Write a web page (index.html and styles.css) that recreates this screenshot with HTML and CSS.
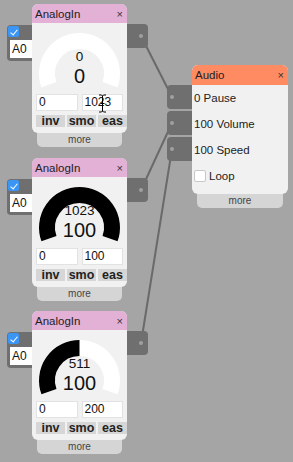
FILE: index.html
```html
<!DOCTYPE html>
<html lang="en">
<head>
  <meta charset="UTF-8" />
  <title>Patch</title>
  <link rel="stylesheet" href="styles.css">
</head>
<body>
  <div class="canvas">
    <svg class="wires" width="293" height="462" viewBox="0 0 293 462">
      <line x1="141" y1="36" x2="172" y2="97" />
      <line x1="141" y1="190" x2="172" y2="123" />
      <line x1="141" y1="343" x2="172" y2="149" />
    </svg>

    <div class="node analog n1">
      <div class="pod pod-in"><span class="check on"></span><span class="pin">A0</span></div>
      <div class="pod pod-out"><i class="dot"></i></div>
      <div class="panel">
        <div class="head"><span>AnalogIn</span><span class="close">×</span></div>
        <div class="body">
          <div class="gauge">
            <svg width="95" height="71" viewBox="0 0 95 71">
              <path class="track" d="M 16.96 61.62 A 32.5 32.5 0 1 1 78.04 61.62" />
            </svg>
            <div class="readout"><span class="raw">0</span><span class="val">0</span></div>
          </div>
          <div class="range"><span class="field">0</span><span class="field">1023</span></div>
          <div class="opts"><span>inv</span><span>smo</span><span>eas</span></div>
        </div>
      </div>
      <div class="more">more</div>
      <svg class="ibeam" width="9" height="19" viewBox="0 0 9 19">
        <path d="M1 1 H3.5 L4.5 2 L5.5 1 H8 M4.5 2 V17 M1 18 H3.5 L4.5 17 L5.5 18 H8 M2.5 9.5 H6.5" />
      </svg>
    </div>

    <div class="node analog n2">
      <div class="pod pod-in"><span class="check on"></span><span class="pin">A0</span></div>
      <div class="pod pod-out"><i class="dot"></i></div>
      <div class="panel">
        <div class="head"><span>AnalogIn</span><span class="close">×</span></div>
        <div class="body">
          <div class="gauge">
            <svg width="95" height="71" viewBox="0 0 95 71">
              <path class="track" d="M 16.96 61.62 A 32.5 32.5 0 1 1 78.04 61.62" />
              <path class="fill" d="M 16.96 61.62 A 32.5 32.5 0 1 1 78.04 61.62" />
            </svg>
            <div class="readout"><span class="raw">1023</span><span class="val">100</span></div>
          </div>
          <div class="range"><span class="field">0</span><span class="field">100</span></div>
          <div class="opts"><span>inv</span><span>smo</span><span>eas</span></div>
        </div>
      </div>
      <div class="more">more</div>
    </div>

    <div class="node analog n3">
      <div class="pod pod-in"><span class="check on"></span><span class="pin">A0</span></div>
      <div class="pod pod-out"><i class="dot"></i></div>
      <div class="panel">
        <div class="head"><span>AnalogIn</span><span class="close">×</span></div>
        <div class="body">
          <div class="gauge">
            <svg width="95" height="71" viewBox="0 0 95 71">
              <path class="track" d="M 16.96 61.62 A 32.5 32.5 0 1 1 78.04 61.62" />
              <path class="fill" d="M 16.96 61.62 A 32.5 32.5 0 0 1 47.5 18" />
            </svg>
            <div class="readout"><span class="raw">511</span><span class="val">100</span></div>
          </div>
          <div class="range"><span class="field">0</span><span class="field">200</span></div>
          <div class="opts"><span>inv</span><span>smo</span><span>eas</span></div>
        </div>
      </div>
      <div class="more">more</div>
    </div>

    <div class="node audio">
      <div class="inlets">
        <div class="pod"><i class="dot"></i></div>
        <div class="pod"><i class="dot"></i></div>
        <div class="pod"><i class="dot"></i></div>
      </div>
      <div class="panel">
        <div class="head"><span>Audio</span><span class="close">×</span></div>
        <div class="body">
          <div class="row">0 Pause</div>
          <div class="row">100 Volume</div>
          <div class="row">100 Speed</div>
          <div class="row"><span class="check"></span>Loop</div>
        </div>
      </div>
      <div class="more">more</div>
    </div>
  </div>
</body>
</html>
```

FILE: styles.css
```css
html, body {
  margin: 0;
  padding: 0;
  background-color: #a5a5a5;
  font-family: "Liberation Sans", Arial, sans-serif;
  color: #111;
}

.canvas {
  position: relative;
  width: 293px;
  height: 462px;
  overflow: hidden;
}

.wires {
  position: absolute;
  top: 0;
  left: 0;
}

.wires line {
  stroke: #6a6a6a;
  stroke-width: 2;
}

/* nodes sit on a free canvas */
.node {
  position: absolute;
  width: 95px;
}

.n1 { left: 32px; top: 4px; }
.n2 { left: 32px; top: 158px; }
.n3 { left: 32px; top: 311px; }

.audio {
  left: 192px;
  top: 65px;
  width: 96px;
}

.panel {
  position: relative;
  z-index: 2;
  background-color: #f1f1f1;
  border-radius: 6px;
  overflow: hidden;
}

.head {
  display: flex;
  justify-content: space-between;
  align-items: center;
  height: 19px;
  padding: 0 4px 0 3px;
  background-color: #e3b0d6;
  font-size: 11.5px;
  color: #222;
}

.audio .head {
  height: 20px;
  background-color: #ff8b62;
}

.close {
  font-size: 11px;
  color: #333;
}

.more {
  margin: 0 5px;
  height: 14px;
  line-height: 13px;
  background-color: #d5d5d5;
  border-radius: 0 0 5px 5px;
  text-align: center;
  font-size: 10px;
  color: #444;
}

/* pods tucked under the panels */
.pod {
  position: absolute;
  z-index: 1;
  background-color: #6f6f6f;
  border-radius: 4px;
}

.pod-in {
  left: -25px;
  top: 21px;
  width: 33px;
  height: 36px;
}

.pod-out {
  left: 88px;
  top: 20px;
  width: 28px;
  height: 24px;
  display: flex;
  align-items: center;
  justify-content: flex-end;
  padding-right: 5px;
  box-sizing: border-box;
}

.dot {
  width: 4px;
  height: 4px;
  border-radius: 50%;
  background-color: #a0a0a0;
}

.check {
  display: block;
  width: 11px;
  height: 11px;
  border-radius: 2px;
  background-color: #fff;
  border: 1px solid #c8c8c8;
  box-sizing: border-box;
}

.check.on {
  position: absolute;
  left: 1px;
  top: 1px;
  border: none;
  background-color: #3b95f5;
}

.check.on:after {
  content: "";
  position: absolute;
  left: 3.5px;
  top: 1.5px;
  width: 3px;
  height: 6px;
  border: solid #fff;
  border-width: 0 1.5px 1.5px 0;
  transform: rotate(40deg);
}

.pin {
  position: absolute;
  left: 3px;
  top: 15px;
  width: 30px;
  height: 18px;
  background-color: #fff;
  font-size: 12px;
  line-height: 18px;
  padding-left: 2px;
  box-sizing: border-box;
}

.body {
  padding: 0 4px 6px 4px;
}

.gauge {
  display: grid;
  height: 71px;
  margin: 0 -4px;
}

.gauge svg,
.gauge .readout {
  grid-area: 1 / 1;
}

.track,
.fill {
  fill: none;
  stroke-width: 16;
}

.track { stroke: #ffffff; }
.fill { stroke: #000000; }

.readout {
  display: flex;
  flex-direction: column;
  align-items: center;
  padding-top: 27px;
  color: #111;
}

.raw {
  font-size: 13.5px;
  line-height: 14px;
}

.val {
  margin-top: 2px;
  font-size: 20px;
  line-height: 20px;
}

.range {
  display: flex;
  gap: 4px;
  width: 87px;
}

.field {
  flex: 1;
  height: 17px;
  background-color: #fff;
  border: 1px solid #e2e2e2;
  box-sizing: border-box;
  font-size: 12px;
  line-height: 15px;
  padding-left: 2px;
}

.opts {
  display: grid;
  grid-template-columns: 1fr 1fr 1fr;
  gap: 2px;
  margin-top: 4px;
  margin-right: -4px;
}

.opts span {
  height: 12px;
  line-height: 12px;
  background-color: #d6d6d6;
  text-align: center;
  font-weight: bold;
  font-size: 12.5px;
  color: #222;
}

.ibeam {
  position: absolute;
  z-index: 3;
  left: 66px;
  top: 90px;
}

.ibeam path {
  fill: none;
  stroke: #000;
  stroke-width: 1;
}

/* audio node */
.inlets {
  position: absolute;
  left: -25px;
  top: 20px;
  display: flex;
  flex-direction: column;
  gap: 2px;
}

.inlets .pod {
  position: static;
  width: 33px;
  height: 24px;
  display: flex;
  align-items: center;
  padding-left: 3px;
  box-sizing: border-box;
}

.audio .body {
  padding: 0 0 5px 2px;
}

.row {
  display: flex;
  align-items: center;
  gap: 3px;
  height: 26px;
  font-size: 11.5px;
  color: #222;
}

.row .check {
  width: 12px;
  height: 12px;
}
```
